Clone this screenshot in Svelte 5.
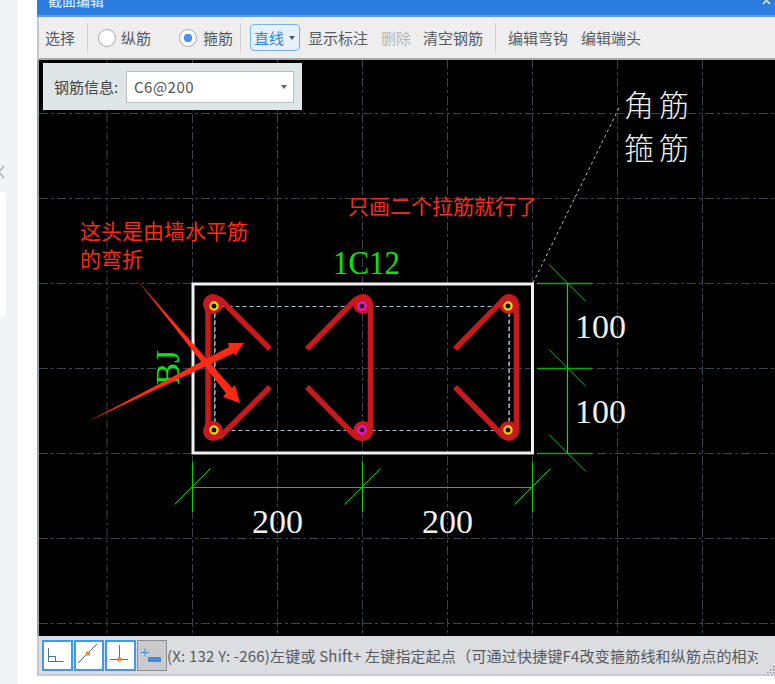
<script>
  const gridX = [107, 192.5, 277.5, 362.5, 447.5, 532.5, 617.5, 702.5];
  const gridY = [113.5, 198.5, 283.5, 368.5, 453.5, 538.5, 623.5];
  const dimTicksX = [192.5, 362.5, 532.5];
  const dimTicksY = [283.5, 368.5, 453.5];
  const pins = [
    { x: 214, y: 306, c: '#f5d80f' },
    { x: 362, y: 306, c: '#f012e8' },
    { x: 508, y: 306, c: '#f5d80f' },
    { x: 214, y: 430, c: '#f5d80f' },
    { x: 362, y: 430, c: '#f012e8' },
    { x: 508, y: 430, c: '#f5d80f' }
  ];
  const blobs = [
    { x: 213, y: 304 },
    { x: 363, y: 304 },
    { x: 509, y: 304 },
    { x: 213, y: 431 },
    { x: 363, y: 431 },
    { x: 509, y: 431 }
  ];
  const status = '(X: 132 Y: -266)左键或 Shift+ 左键指定起点（可通过快捷键F4改变箍筋线和纵筋点的相对';
</script>

<div class="page">
  <aside class="side">
    <svg class="chev" width="6" height="14" viewBox="0 0 6 14"><path d="M5 1 L0 7 L5 13" fill="none" stroke="#a5a8ad" stroke-width="1.2" /></svg>
    <div class="side-card"></div>
  </aside>

  <div class="dialog">
    <header class="title">
      <span>截面编辑</span>
      <svg class="close" width="12" height="8" viewBox="0 0 12 8"><path d="M1 -3 L8 4 M8 -3 L1 4" stroke="#fff" stroke-width="1.4" /></svg>
    </header>

    <div class="toolbar">
      <span class="tool first">选择</span>
      <i class="sep s1"></i>
      <span class="radio"></span>
      <span class="tool r1">纵筋</span>
      <span class="radio on r2"></span>
      <span class="tool r3">箍筋</span>
      <i class="sep s2"></i>
      <button class="line-btn">直线<b class="caret"></b></button>
      <span class="tool t1">显示标注</span>
      <span class="tool off t2">删除</span>
      <span class="tool t3">清空钢筋</span>
      <i class="sep s3"></i>
      <span class="tool t4">编辑弯钩</span>
      <span class="tool t5">编辑端头</span>
    </div>

    <div class="canvas">
      <svg width="736" height="576" viewBox="39 60 736 576">
        {#each gridX as x}
          <line x1={x} y1="60" x2={x} y2="636" class="grid" />
        {/each}
        {#each gridY as y}
          <line x1="39" y1={y} x2="775" y2={y} class="grid" />
        {/each}

        <line x1="533" y1="283" x2="620" y2="106" stroke="#b5b5b5" stroke-width="1" stroke-dasharray="3 3" />

        <rect x="214.5" y="306.500" width="295" height="124" class="guide" />
        <line x1="215" y1="306" x2="215" y2="430" class="guide-side" />
        <line x1="509" y1="306" x2="509" y2="430" class="guide-side" />

        <rect x="193" y="284" width="339.5" height="169" fill="none" stroke="#f0f0f0" stroke-width="3" />

        <g class="bar">
          <path d="M270 349 L221 300 A9 9 0 0 0 208 308 L208 427 A9 9 0 0 0 221 436 L270 387" />
          <path d="M307 349 L355 300 A9.5 9.5 0 0 1 370.5 308 L370.5 427 A9.5 9.5 0 0 1 355 436 L307 387" />
          <path d="M455 349 L503 300 A9 9 0 0 1 516.5 308 L516.5 427 A9 9 0 0 1 503 436 L455 387" />
        </g>
        {#each blobs as b}
          <circle cx={b.x} cy={b.y} r="10" fill="#c8191f" />
        {/each}

        {#each pins as p}
          <circle cx={p.x} cy={p.y} r="3.6" fill="#1a1008" stroke={p.c} stroke-width="2.2" />
        {/each}

        <g class="dim">
          <line x1="192" y1="487.5" x2="533" y2="487.5" />
          {#each dimTicksX as x}
            <line x1={x} y1="462" x2={x} y2="512" />
            <line x1={x - 18} y1="504.5" x2={x + 18} y2="468.5" />
          {/each}
          <line x1="567.5" y1="283" x2="567.5" y2="454" class="upright" />
          {#each dimTicksY as y}
            <line x1="537" y1={y} x2="592" y2={y} class="thick" />
            <line x1="549" y1={y - 19} x2="586" y2={y + 18} />
          {/each}
        </g>

        <text x="333" y="274" class="serif green" font-size="33" textLength="67" lengthAdjust="spacingAndGlyphs">1C12</text>
        <text transform="translate(179 385) rotate(-90)" class="serif green" font-size="33">BJ</text>

        <text x="252" y="533" class="serif white" font-size="34">200</text>
        <text x="422" y="533" class="serif white" font-size="34">200</text>
        <text x="575" y="338" class="serif white" font-size="34">100</text>
        <text x="575" y="423" class="serif white" font-size="34">100</text>

        <text x="624" y="116" class="cjk white big">角筋</text>
        <text x="624" y="159" class="cjk white big">箍筋</text>

        <text x="348" y="214" class="cjk red">只画二个拉筋就行了</text>
        <text x="80" y="239" class="cjk red">这头是由墙水平筋</text>
        <text x="80" y="267" class="cjk red">的弯折</text>

        <polygon points="87,422 229,347 228,343 244,343 235,356 234,353" fill="#ff2a14" />
        <polygon points="137,280 232,388 235,385 240,403 223,397 226,393" fill="#ff2a14" />
      </svg>

      <div class="info">
        <span class="info-label">钢筋信息:</span>
        <div class="combo">
          <span>C6@200</span>
          <b class="caret grey"></b>
        </div>
      </div>
    </div>

    <footer class="status">
      <div class="snap">
        <button class="snap-btn">
          <svg width="27" height="27" viewBox="0 0 27 27"><path d="M4.500 6 V19.500 H19.500 M4.500 14.500 H11.500 V19.500" fill="none" stroke="#4d6f9a" stroke-width="1" /></svg>
        </button>
        <button class="snap-btn">
          <svg width="26" height="27" viewBox="0 0 26 27"><path d="M2 21 L21 2" stroke="#4d6f9a" stroke-width="1" /><rect x="10" y="9.500" width="4" height="4" fill="#f08a30" /></svg>
        </button>
        <button class="snap-btn">
          <svg width="27" height="27" viewBox="0 0 27 27"><path d="M12.500 3 V18 M3 17.500 H21" stroke="#4d6f9a" stroke-width="1" /><rect x="10.500" y="15.500" width="4" height="4" fill="#f08a30" /></svg>
        </button>
        <button class="snap-btn plain">
          <svg width="28" height="29" viewBox="0 0 28 29"><path d="M3 11.500 H11 M7 7.500 V15.500" stroke="#3f8fd8" stroke-width="1" /><rect x="10" y="16" width="13" height="5" fill="#3f8fd8" /></svg>
        </button>
      </div>
      <span class="status-text">{status}</span>
      <svg class="grip" width="8" height="8" viewBox="0 0 8 8"><path d="M6 1h1.500v1.500H6zM3 4h1.500v1.500H3zM6 4h1.500v1.500H6zM0 7h1.500v1H0zM3 7h1.500v1H3zM6 7h1.500v1H6z" fill="#9a9a9a" /></svg>
    </footer>
  </div>
</div>

<style>
  :global(body) {
    margin: 0;
    background: #fff;
  }

  .page {
    display: flex;
    width: 775px;
    height: 684px;
    overflow: hidden;
    font-family: "Noto Sans CJK SC", "Liberation Sans", sans-serif;
  }

  .side {
    position: relative;
    flex: 0 0 17px;
    background: #f1f2f4;
    margin-right: 20px;
  }

  .chev {
    position: absolute;
    left: -1px;
    top: 165px;
  }

  .side-card {
    position: absolute;
    left: 0;
    top: 192px;
    width: 6px;
    height: 125px;
    background: #fff;
    border-radius: 0 2px 2px 0;
  }

  .dialog {
    flex: 1;
    height: 676px;
    display: flex;
    flex-direction: column;
    background: #dcdde0;
  }

  .title {
    position: relative;
    height: 15px;
    flex: none;
    background: #2b7ddf;
    border-bottom: 2px solid #5d9be3;
    color: #e8f1fc;
    font-size: 14px;
    line-height: 14px;
    overflow: hidden;
  }

  .title span {
    position: absolute;
    left: 11px;
    top: -7px;
  }

  .close {
    position: absolute;
    right: 1px;
    top: 0;
  }

  .toolbar {
    flex: none;
    height: 41px;
    display: flex;
    align-items: center;
    background: #eeeeee;
    border-left: 2px solid #c6c8cc;
    border-bottom: 2px solid #a8a8a8;
    color: #555a60;
    font-size: 15px;
  }

  .tool {
    white-space: nowrap;
    line-height: 20px;
  }

  .first { margin-left: 6px; }
  .off { color: #b8b8b8; }

  .sep {
    width: 1px;
    height: 30px;
    background: #d2d2d2;
  }

  .s1 { margin: 0 10px 0 12px; }
  .s2 { margin: 0 9px 0 7px; }
  .s3 { margin: 0 12px 0 12px; }

  .radio {
    box-sizing: border-box;
    width: 18px;
    height: 18px;
    border-radius: 50%;
    border: 1px solid #a9a9a9;
    background: #fff;
  }

  .radio.on {
    background: radial-gradient(circle, #4a94f0 0 4px, #fff 4.6px);
  }

  .r1 { margin-left: 5px; }
  .r2 { margin-left: 28px; }
  .r3 { margin-left: 6px; }

  .line-btn {
    box-sizing: border-box;
    width: 50px;
    height: 27px;
    padding: 0 0 0 3px;
    display: flex;
    align-items: center;
    gap: 5px;
    border: 1px solid #78b2ee;
    border-radius: 4px;
    background: #e6f1fc;
    color: #2f86e0;
    font: inherit;
  }

  .caret {
    width: 0;
    height: 0;
    border: 3.5px solid transparent;
    border-top: 4px solid #555;
    border-bottom: 0;
  }

  .caret.grey { border-top-color: #666; }

  .t1 { margin-left: 8px; }
  .t2 { margin-left: 13px; }
  .t3 { margin-left: 12px; }
  .t5 { margin-left: 13px; }

  .canvas {
    position: relative;
    flex: none;
    height: 576px;
    background: #000;
    border-left: 2px solid #9a9ea5;
  }

  .canvas svg {
    display: block;
  }

  .grid {
    stroke: #3a424c;
    stroke-width: 1;
    stroke-dasharray: 9 3 3 3;
  }

  .guide {
    fill: none;
    stroke: #a8c4dc;
    stroke-width: 1;
    stroke-dasharray: 4 3;
  }

  .guide-side {
    stroke: #8fa8bd;
    stroke-width: 1.4;
    stroke-dasharray: 4 3;
  }

  .bar path {
    fill: none;
    stroke: #c8191f;
    stroke-width: 5.5;
  }

  .dim line {
    stroke: #0ccc0c;
    stroke-width: 1;
  }

  .dim line.upright {
    stroke: #0ee00e;
    stroke-width: 1.2;
  }

  .dim line.thick {
    stroke: #0aa80a;
    stroke-width: 1.5;
  }

  .serif { font-family: "Liberation Serif", serif; }
  .green { fill: #12e012; }
  .white { fill: #f0f0f0; }
  .cjk { font-family: "Noto Sans CJK SC", sans-serif; }
  .big { font-size: 30px; font-weight: 300; letter-spacing: 5px; }
  .red { fill: #ff2a14; font-size: 21px; }

  .info {
    position: absolute;
    left: 4px;
    top: 3px;
    width: 259px;
    height: 47px;
    display: flex;
    align-items: center;
    gap: 7px;
    padding-left: 11px;
    box-sizing: border-box;
    background: #dfe6e8;
    font-size: 15px;
    color: #444;
  }

  .info-label { white-space: nowrap; width: 65px; flex: none; }

  .combo {
    box-sizing: border-box;
    width: 168px;
    height: 32px;
    display: flex;
    align-items: center;
    justify-content: space-between;
    padding: 0 6px 0 7px;
    background: #fff;
    border: 1px solid #bdbdbd;
    color: #555;
    letter-spacing: 0.5px;
  }

  .status {
    position: relative;
    flex: 1;
    display: flex;
    align-items: center;
    border-left: 2px solid #c6c8cc;
    border-bottom: 2px solid #c9cacd;
    font-size: 15px;
    color: #555a60;
    overflow: hidden;
  }

  .snap {
    display: flex;
    gap: 1px;
    margin-left: 3px;
    flex: none;
  }

  .snap-btn {
    box-sizing: border-box;
    width: 31px;
    height: 31px;
    padding: 0;
    display: flex;
    align-items: center;
    justify-content: center;
    background: #fff;
    border: 2px solid #3a9bf0;
  }

  .snap-btn:nth-child(even) {
    width: 30px;
  }

  .snap-btn.plain {
    background: #c9cacd;
    border: 1px solid #8e8e8e;
  }

  .status-text {
    white-space: nowrap;
    width: 591px;
    overflow: hidden;
    flex: none;
    letter-spacing: 0.2px;
  }

  .grip {
    position: absolute;
    right: 0;
    bottom: 1px;
  }
</style>
